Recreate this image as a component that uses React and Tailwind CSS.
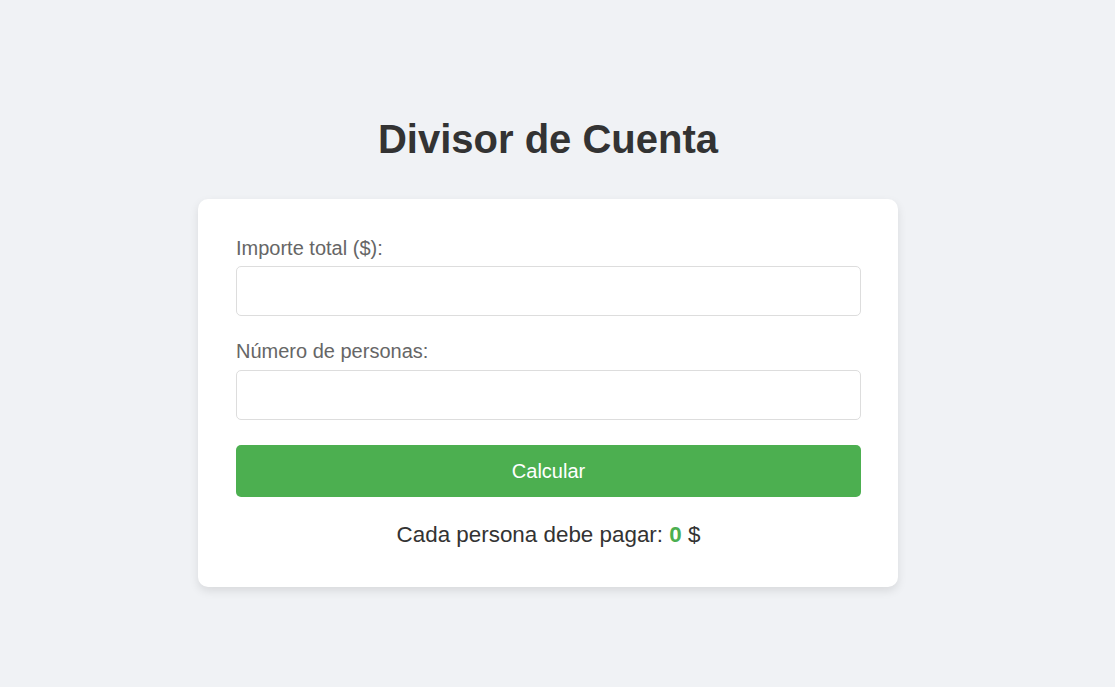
export default function App() {
  return (
    <div
      className="min-h-screen w-full bg-[#f0f2f5] flex flex-col items-center pt-[116px] pr-[19px]"
      style={{ fontFamily: '"Liberation Sans", Arial, sans-serif' }}
    >
      <h1 className="text-[40px] leading-[46px] font-bold text-[#333333] m-0">Divisor de Cuenta</h1>
      <div className="mt-[37px] w-[700px] bg-white rounded-[10px] shadow-[0_4px_10px_rgba(0,0,0,0.1)] pt-[38px] pb-[39px] pl-[38px] pr-[37px] flex flex-col">
        <label className="block text-[20px] leading-[23px] text-[#666666] mb-[6px]">Importe total ($):</label>
        <input
          type="number"
          className="block w-full h-[50px] border border-[#dddddd] rounded-[5px] px-[10px] text-[18px] outline-none bg-white mb-[24px]"
        />
        <label className="block text-[20px] leading-[23px] text-[#666666] mb-[7px]">Número de personas:</label>
        <input
          type="number"
          className="block w-full h-[50px] border border-[#dddddd] rounded-[5px] px-[10px] text-[18px] outline-none bg-white mb-[25px]"
        />
        <button className="w-full h-[52px] bg-[#4caf50] text-white text-[20px] rounded-[5px] flex items-center justify-center">
          Calcular
        </button>
        <p className="mt-[25px] text-center text-[22.4px] leading-[26px] text-[#333333]">
          Cada persona debe pagar: <span className="font-bold text-[#4caf50]">0</span> $
        </p>
      </div>
    </div>
  );
}
